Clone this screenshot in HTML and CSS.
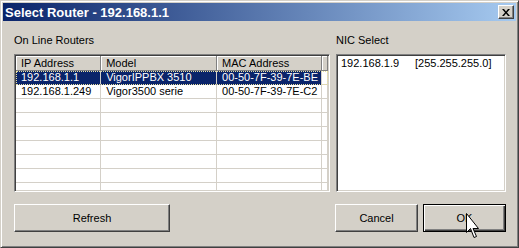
FILE: index.html
```html
<!DOCTYPE html>
<html>
    <head>
        <meta charset="UTF-8" />
        <title>Select Router</title>
        <link rel="stylesheet" href="styles.css">
    </head>
    <body>
        <div class="window">
            <div class="titlebar">
                <span class="title">Select Router - 192.168.1.1</span>
                <button class="close">
                    <svg width="8" height="7" viewBox="0 0 8 7">
                        <path d="M0 0h2l2 2.5 2-2.5h2l-3 3.5 3 3.5h-2l-2-2.5-2 2.5h-2l3-3.5z" fill="#000"/>
                    </svg>
                </button>
            </div>
            <div class="content">
                <div class="panes">
                    <div class="pane">
                        <div class="label">On Line Routers</div>
                        <div class="listview">
                            <div class="lv-head">
                                <div class="hcell c-ip">IP Address</div>
                                <div class="hcell c-model">Model</div>
                                <div class="hcell c-mac">MAC Address</div>
                                <div class="hcell c-rest"></div>
                            </div>
                            <div class="lv-row selected">
                                <div class="cell c-ip">192.168.1.1</div>
                                <div class="cell c-model">VigorIPPBX 3510</div>
                                <div class="cell c-mac">00-50-7F-39-7E-BE</div>
                                <div class="cell c-rest"></div>
                            </div>
                            <div class="lv-row">
                                <div class="cell c-ip">192.168.1.249</div>
                                <div class="cell c-model">Vigor3500 serie</div>
                                <div class="cell c-mac">00-50-7F-39-7E-C2</div>
                                <div class="cell c-rest"></div>
                            </div>
                            <div class="lv-row"><div class="cell c-ip"></div><div class="cell c-model"></div><div class="cell c-mac"></div><div class="cell c-rest"></div></div>
                            <div class="lv-row"><div class="cell c-ip"></div><div class="cell c-model"></div><div class="cell c-mac"></div><div class="cell c-rest"></div></div>
                            <div class="lv-row"><div class="cell c-ip"></div><div class="cell c-model"></div><div class="cell c-mac"></div><div class="cell c-rest"></div></div>
                            <div class="lv-row"><div class="cell c-ip"></div><div class="cell c-model"></div><div class="cell c-mac"></div><div class="cell c-rest"></div></div>
                            <div class="lv-row"><div class="cell c-ip"></div><div class="cell c-model"></div><div class="cell c-mac"></div><div class="cell c-rest"></div></div>
                            <div class="lv-row"><div class="cell c-ip"></div><div class="cell c-model"></div><div class="cell c-mac"></div><div class="cell c-rest"></div></div>
                            <div class="lv-row"><div class="cell c-ip"></div><div class="cell c-model"></div><div class="cell c-mac"></div><div class="cell c-rest"></div></div>
                        </div>
                    </div>
                    <div class="pane">
                        <div class="label">NIC Select</div>
                        <div class="listbox">
                            <div class="nic"><span class="nic-ip">192.168.1.9</span><span>[255.255.255.0]</span></div>
                        </div>
                    </div>
                </div>
                <div class="buttons">
                    <button class="btn refresh">Refresh</button>
                    <div class="btn-group">
                        <button class="btn">Cancel</button>
                        <button class="btn default">OK</button>
                    </div>
                </div>
            </div>
            <svg class="cursor" width="13" height="26" viewBox="0 0 13 26">
                <path d="M0.5 0.5V19.5L4.5 15.5L8 24.5L10.5 23.5L7 15.5H12.5Z" fill="#fff" stroke="#000" stroke-width="1" stroke-linejoin="miter"/>
            </svg>
        </div>
    </body>
</html>
```

FILE: styles.css
```css
body{
    margin: 0;
    background-color: #d4d0c8;
    font-family: "Liberation Sans", Arial, sans-serif;
    font-size: 11px;
    color: #000;
}
.window{
    position: relative;
    width: 519px;
    height: 248px;
    box-sizing: border-box;
    padding: 2px;
    border: 1px solid;
    border-color: #d4d0c8 #404040 #404040 #d4d0c8;
    box-shadow: inset 1px 1px #fff, inset -1px -1px #808080;
    background-color: #d4d0c8;
}
.titlebar{
    height: 18px;
    display: flex;
    align-items: center;
    justify-content: space-between;
    background: linear-gradient(to right, #0a246a, #a6caf0);
}
.title{
    color: #fff;
    font-weight: bold;
    font-size: 13px;
    padding-left: 2px;
}
.close{
    width: 16px;
    height: 14px;
    margin-right: 2px;
    padding: 0;
    display: flex;
    align-items: center;
    justify-content: center;
    background-color: #d4d0c8;
    border: 1px solid;
    border-color: #fff #404040 #404040 #fff;
    box-shadow: inset -1px -1px #808080;
}
.content{
    padding: 13px 10px 0 11px;
}
.panes{
    display: grid;
    grid-template-columns: 316px 170px;
    column-gap: 6px;
}
.label{
    height: 13px;
    line-height: 13px;
    margin-bottom: 7px;
}
.listview, .listbox{
    height: 138px;
    box-sizing: border-box;
    border: 1px solid;
    border-color: #808080 #fff #fff #808080;
    box-shadow: inset 1px 1px #404040, inset -1px -1px #d4d0c8;
    padding: 1px;
    background-color: #fff;
    overflow: hidden;
}
.lv-head, .lv-row{
    display: flex;
}
.c-ip{ width: 86px; }
.c-model{ width: 117px; }
.c-mac{ width: 106px; }
.c-rest{ flex: 1; }
.hcell{
    height: 15px;
    line-height: 14px;
    box-sizing: border-box;
    padding-left: 5px;
    background-color: #d4d0c8;
    border-right: 1px solid #808080;
    border-bottom: 1px solid #808080;
    box-shadow: inset 1px 1px #fff;
}
.cell{
    height: 14px;
    line-height: 13px;
    box-sizing: border-box;
    padding-left: 5px;
    border-right: 1px solid #d4d0c8;
    border-bottom: 1px solid #d4d0c8;
    white-space: nowrap;
}
.lv-row.selected{
    outline: 1px dotted #e8e0a0;
    outline-offset: -1px;
}
.lv-row.selected .c-ip,
.lv-row.selected .c-model,
.lv-row.selected .c-mac{
    background-color: #0a246a;
    color: #fff;
    border-bottom-color: #0a246a;
}
.listbox{
    padding: 2px 2px;
}
.nic{
    display: flex;
    height: 13px;
    line-height: 13px;
    padding-left: 2px;
}
.nic-ip{
    width: 74px;
}
.buttons{
    display: flex;
    justify-content: space-between;
    margin-top: 12px;
}
.btn{
    height: 28px;
    box-sizing: border-box;
    padding: 0;
    font-family: "Liberation Sans", Arial, sans-serif;
    font-size: 11px;
    color: #000;
    background-color: #d4d0c8;
    border: 1px solid;
    border-color: #fff #404040 #404040 #fff;
    box-shadow: inset -1px -1px #808080;
}
.refresh{
    width: 156px;
}
.btn-group{
    display: flex;
    gap: 5px;
}
.btn-group .btn{
    width: 83px;
}
.btn.default{
    border-color: #000;
    box-shadow: inset 1px 1px #fff, inset -1px -1px #404040, inset -2px -2px #808080;
}
.cursor{
    position: absolute;
    left: 465px;
    top: 212px;
}
```
